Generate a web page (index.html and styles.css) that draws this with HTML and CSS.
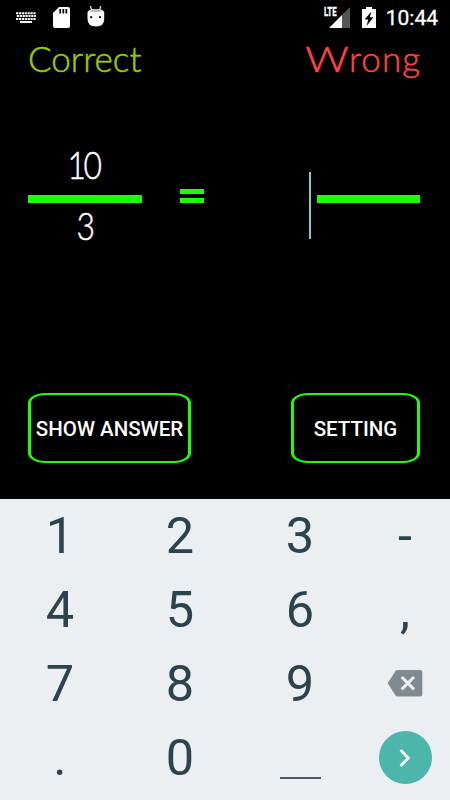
FILE: index.html
```
<!DOCTYPE html>
<html lang="en">
	<head>
		<meta charset="utf-8">
		<title>Fractions</title>
		<link rel="stylesheet" href="styles.css">
	</head>
	<body>
		<div class="screen">
			<div class="status-bar">
				<svg class="icon-keyboard" width="20" height="12" viewBox="0 0 20 12">
					<g fill="none" stroke="#fff" stroke-width="2">
						<path d="M0 1.2H20" stroke-dasharray="2.2 .7"/>
						<path d="M.8 4.1H20" stroke-dasharray="2.2 .7"/>
						<path d="M0 7H20" stroke-dasharray="2.2 .7"/>
						<path d="M4 10H16"/>
					</g>
				</svg>
				<svg class="icon-sd" width="17" height="21" viewBox="0 0 17 21">
					<path d="M6 0H15Q17 0 17 2V19Q17 21 15 21H2Q0 21 0 19V6Z" fill="#fff"/>
					<path d="M7.2 2V6.5M10.3 2V6.5M13.3 2V6.5" stroke="#000" stroke-width="1.7"/>
				</svg>
				<svg class="icon-robot" width="18" height="21" viewBox="0 0 18 21">
					<path d="M3.2 0L5 5M13.8 0L12.5 5" stroke="#ddd" stroke-width="1.3"/>
					<path d="M.5 6Q2 3 9 3Q16 3 17.2 6V13Q17.2 20.5 9 20.5Q.5 20.5 .5 13Z" fill="#fff"/>
					<path d="M3 6Q4 3 9 3Q14 3 15 6Z" fill="#bbb"/>
					<circle cx="4.2" cy="11.2" r="1.1" fill="#000"/>
					<circle cx="13" cy="11.2" r="1.1" fill="#000"/>
				</svg>
				<span class="lte">LTE</span>
				<svg class="icon-signal" width="21" height="21" viewBox="0 0 21 21">
					<path d="M21 0V21H13V8Z" fill="#555"/>
					<path d="M13 8V21H0Z" fill="#fff"/>
				</svg>
				<svg class="icon-battery" width="14" height="21" viewBox="0 0 14 21">
					<path d="M4 0H10V2H14V21H0V2H4Z" fill="#fff"/>
					<path d="M9.4 4.5L2.6 12.5H6.2L4.6 19L11.4 10.2H7.8Z" fill="#000"/>
				</svg>
				<span class="clock">10:44</span>
			</div>

			<div class="score">
				<span class="correct">Correct</span>
				<span class="wrong"><span class="wide">W</span>rong</span>
			</div>

			<div class="question">
				<div class="fraction">
					<span class="number">10</span>
					<div class="bar"></div>
					<span class="number bottom">3</span>
				</div>
				<div class="equals"></div>
				<div class="cursor"></div>
				<div class="bar answer"></div>
			</div>

			<div class="actions">
				<button class="btn btn-answer">SHOW ANSWER</button>
				<button class="btn btn-setting">SETTING</button>
			</div>

			<div class="keypad">
				<div class="key">1</div>
				<div class="key">2</div>
				<div class="key">3</div>
				<div class="key">-</div>
				<div class="key">4</div>
				<div class="key">5</div>
				<div class="key">6</div>
				<div class="key">,</div>
				<div class="key">7</div>
				<div class="key">8</div>
				<div class="key">9</div>
				<div class="key">
					<svg class="icon-delete" width="36" height="28" viewBox="0 0 36 28">
						<path d="M10.5 1H33Q35.3 1 35.3 3V25.3Q35.3 27.5 33 27.5H10.5Q9.2 27.5 8.5 26.4L.7 14.2L8.5 2.1Q9.2 1 10.5 1Z" fill="#808b8f"/>
						<path d="M14.7 8L27 20.4M27 8L14.7 20.4" stroke="#ebeff2" stroke-width="3"/>
					</svg>
				</div>
				<div class="key">.</div>
				<div class="key">0</div>
				<div class="key"><div class="space"></div></div>
				<div class="key">
					<div class="next">
						<svg width="12" height="18" viewBox="0 0 12 18">
							<path d="M1.5 1L9.3 9L1.5 17" fill="none" stroke="#fff" stroke-width="2.8"/>
						</svg>
					</div>
				</div>
			</div>
		</div>
	</body>
</html>
```
FILE: styles.css
```
body {
	margin: 0;
	background: #000;
	font-family: Roboto, "Liberation Sans", sans-serif;
}
.screen {
	width: 450px;
	height: 800px;
	overflow: hidden;
	display: flex;
	flex-direction: column;
	background: #000;
	color: #fff;
}
.status-bar {
	height: 36px;
	box-sizing: border-box;
	padding: 7px 12px 0 16px;
	display: flex;
	align-items: flex-start;
}
.icon-keyboard {
	margin-top: 5px;
}
.icon-sd {
	margin-left: 17px;
}
.icon-robot {
	margin: -1px 0 0 17px;
}
.lte {
	width: 5px;
	margin-left: auto;
	font-size: 13px;
	line-height: 10px;
	font-weight: 700;
	white-space: nowrap;
	transform: scaleX(0.6);
	transform-origin: 0 0;
	-webkit-text-stroke: 0.4px #fff;
}
.icon-battery {
	margin-left: 12px;
}
.clock {
	margin-left: 10px;
	font-size: 21px;
	line-height: 23px;
	font-weight: 400;
	white-space: nowrap;
	-webkit-text-stroke: 0.3px #fff;
}
.score {
	height: 54px;
	padding: 0 30px 0 28px;
	display: flex;
	justify-content: space-between;
	font-family: Lato, sans-serif;
	font-weight: 300;
	font-size: 35px;
	line-height: 45px;
}
.correct {
	color: #99cc00;
	-webkit-text-stroke: 0.5px #99cc00;
}
.wrong {
	color: #ff4444;
	letter-spacing: 1px;
	margin-right: -1px;
	-webkit-text-stroke: 0.5px #ff4444;
}
.wide {
	display: inline-block;
	letter-spacing: 0;
	transform: scaleX(1.22);
	transform-origin: 100% 0;
}
.question {
	height: 303px;
	padding: 0 30px 0 28px;
	box-sizing: border-box;
	display: flex;
	align-items: flex-start;
}
.fraction {
	width: 114px;
	padding-top: 53px;
	text-align: center;
}
.number {
	display: block;
	height: 52px;
	margin-left: -3px;
	font-family: Lato, sans-serif;
	font-weight: 300;
	font-size: 37px;
	line-height: 44px;
	letter-spacing: -3px;
	transform: scaleX(0.86);
	-webkit-text-stroke: 0.5px #fff;
}
.bottom {
	padding-top: 1px;
	margin-left: -1px;
}
.bar {
	height: 8px;
	background: #1cff00;
}
.equals {
	width: 24px;
	height: 4px;
	margin: 99px 0 0 38px;
	border-top: 5px solid #1cff00;
	border-bottom: 5px solid #1cff00;
}
.cursor {
	width: 2px;
	height: 67px;
	margin: 82px 6px 0 auto;
	background: #80cbc4;
}
.answer {
	width: 103px;
	margin-top: 105px;
}
.actions {
	height: 106px;
	padding: 0 30px 0 28px;
	display: flex;
	justify-content: space-between;
	align-items: flex-start;
}
.btn {
	height: 70px;
	padding: 2px 0 0;
	background: #000;
	border: 2px solid #1cff00;
	border-left-width: 3px;
	border-right-width: 3px;
	border-radius: 17px / 10px;
	color: #fff;
	font-family: Roboto, "Liberation Sans", sans-serif;
	font-size: 20.5px;
	font-weight: 500;
	white-space: nowrap;
}
.btn-answer {
	width: 163px;
}
.btn-setting {
	width: 129px;
}
.keypad {
	height: 301px;
	display: grid;
	grid-template-columns: 120px 120px 120px 90px;
	grid-template-rows: repeat(4, 74px);
	background: #ebeff2;
	color: #2c434d;
}
.key {
	display: flex;
	justify-content: center;
	align-items: center;
	font-size: 50.5px;
	line-height: 74px;
}
.icon-delete {
	margin-bottom: 2px;
}
.space {
	width: 41px;
	height: 2px;
	margin-top: 39px;
	background: #455a64;
}
.next {
	width: 53px;
	height: 53px;
	margin-bottom: 1px;
	border-radius: 50%;
	background: #4db6ac;
	display: flex;
	justify-content: center;
	align-items: center;
}
```
